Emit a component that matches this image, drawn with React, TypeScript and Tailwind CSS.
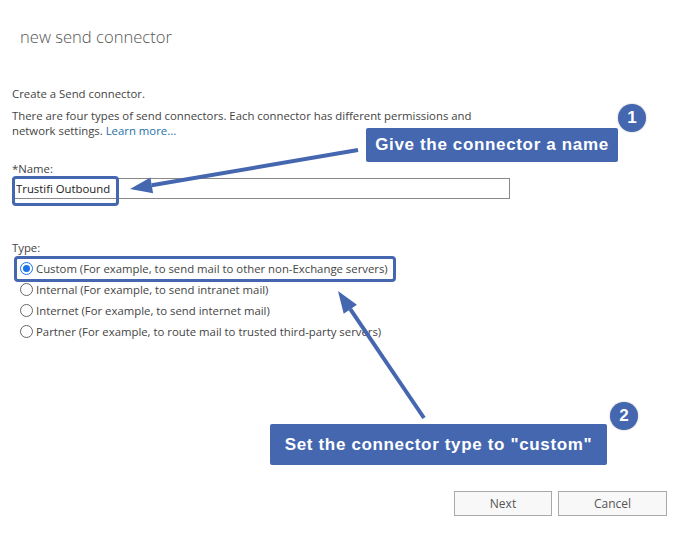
import React from 'react';

const ui = { fontFamily: '"Open Sans", "Noto Sans", sans-serif' };
const callout = { fontFamily: '"Liberation Sans", Arial, sans-serif' };

type RadioProps = { label: string; checked?: boolean };

const Radio = ({ label, checked }: RadioProps) => (
  <label className="flex items-center gap-[3px] h-[21px] text-[11.35px] text-[#444]">
    <span
      className={`w-[13px] h-[13px] rounded-full border flex items-center justify-center ${
        checked ? 'border-[#1a73e8]' : 'border-[#666]'
      }`}
    >
      {checked && <span className="w-[7px] h-[7px] rounded-full bg-[#1a73e8]" />}
    </span>
    <span>{label}</span>
  </label>
);

const Badge = ({ n, className }: { n: string; className: string }) => (
  <div
    className={`absolute w-[28px] h-[28px] rounded-full bg-[#4567b0] text-white font-bold text-[17px] flex items-center justify-center shadow-[0_0_2px_rgba(0,0,0,0.3)] ${className}`}
    style={callout}
  >
    {n}
  </div>
);

export default function App() {
  return (
    <div className="relative w-[700px] h-[549px] bg-white overflow-hidden" style={ui}>
      {/* ====== DIALOG ====== */}
      <div className="px-[12px] pt-[26px]">
        <h1 className="pl-[8px] text-[16.6px] font-light text-[#555] leading-[22px]">new send connector</h1>

        <p className="mt-[38px] text-[11.35px] text-[#444] leading-[15px]">Create a Send connector.</p>
        <p className="mt-[7px] w-[480px] text-[11.35px] text-[#444] leading-[15px]">
          There are four types of send connectors. Each connector has different permissions and
          network settings. <span className="text-[#1e6fa8]">Learn more...</span>
        </p>

        <p className="mt-[23px] text-[11.35px] text-[#444] leading-[15px]">*Name:</p>
        <div className="mt-[2px] w-[498px] h-[21px] border border-[#888] flex items-center px-[3px] text-[11.35px] text-[#222]">
          Trustifi Outbound
        </div>

        <p className="mt-[41px] text-[11.35px] text-[#444] leading-[15px]">Type:</p>
        <div className="mt-[3px] pl-[8px] flex flex-col">
          <Radio label="Custom (For example, to send mail to other non-Exchange servers)" checked />
          <Radio label="Internal (For example, to send intranet mail)" />
          <Radio label="Internet (For example, to send internet mail)" />
          <Radio label="Partner (For example, to route mail to trusted third-party servers)" />
        </div>

        <div className="mt-[149px] flex justify-end gap-[6px] pr-[21px]">
          <button className="w-[98px] h-[25px] border border-[#aaa] bg-[#f8f8f8] text-[12px] text-[#555]">
            Next
          </button>
          <button className="w-[109px] h-[25px] border border-[#aaa] bg-[#f8f8f8] text-[12px] text-[#555]">
            Cancel
          </button>
        </div>
      </div>

      {/* ====== ANNOTATIONS ====== */}
      <div className="absolute left-[12px] top-[176px] w-[107px] h-[30px] border-[3px] border-[#4567b0] rounded-[4px]" />
      <div className="absolute left-[14px] top-[256px] w-[382px] h-[26px] border-[3px] border-[#4567b0] rounded-[4px]" />

      <svg className="absolute inset-0" width="700" height="549">
        <line x1="358" y1="150" x2="151.7" y2="185.3" stroke="#4567b0" strokeWidth="4" />
        <polygon points="130,189 150.4,177.4 153.1,193.2" fill="#4567b0" />
        <line x1="424" y1="418" x2="350.3" y2="309.2" stroke="#4567b0" strokeWidth="4" />
        <polygon points="338,291 356.9,304.7 343.7,313.7" fill="#4567b0" />
      </svg>

      <div
        className="absolute left-[366px] top-[128px] w-[252px] h-[34px] rounded-[2px] bg-[#4567b0] text-white font-bold text-[17px] tracking-[0.65px] flex items-center justify-center"
        style={callout}
      >
        Give the connector a name
      </div>
      <Badge n="1" className="left-[618px] top-[104px]" />

      <div
        className="absolute left-[270px] top-[424px] w-[337px] h-[41px] rounded-[2px] bg-[#4567b0] text-white font-bold text-[17px] tracking-[0.65px] flex items-center justify-center"
        style={callout}
      >
        Set the connector type to "custom"
      </div>
      <Badge n="2" className="left-[610px] top-[402px]" />
    </div>
  );
}
